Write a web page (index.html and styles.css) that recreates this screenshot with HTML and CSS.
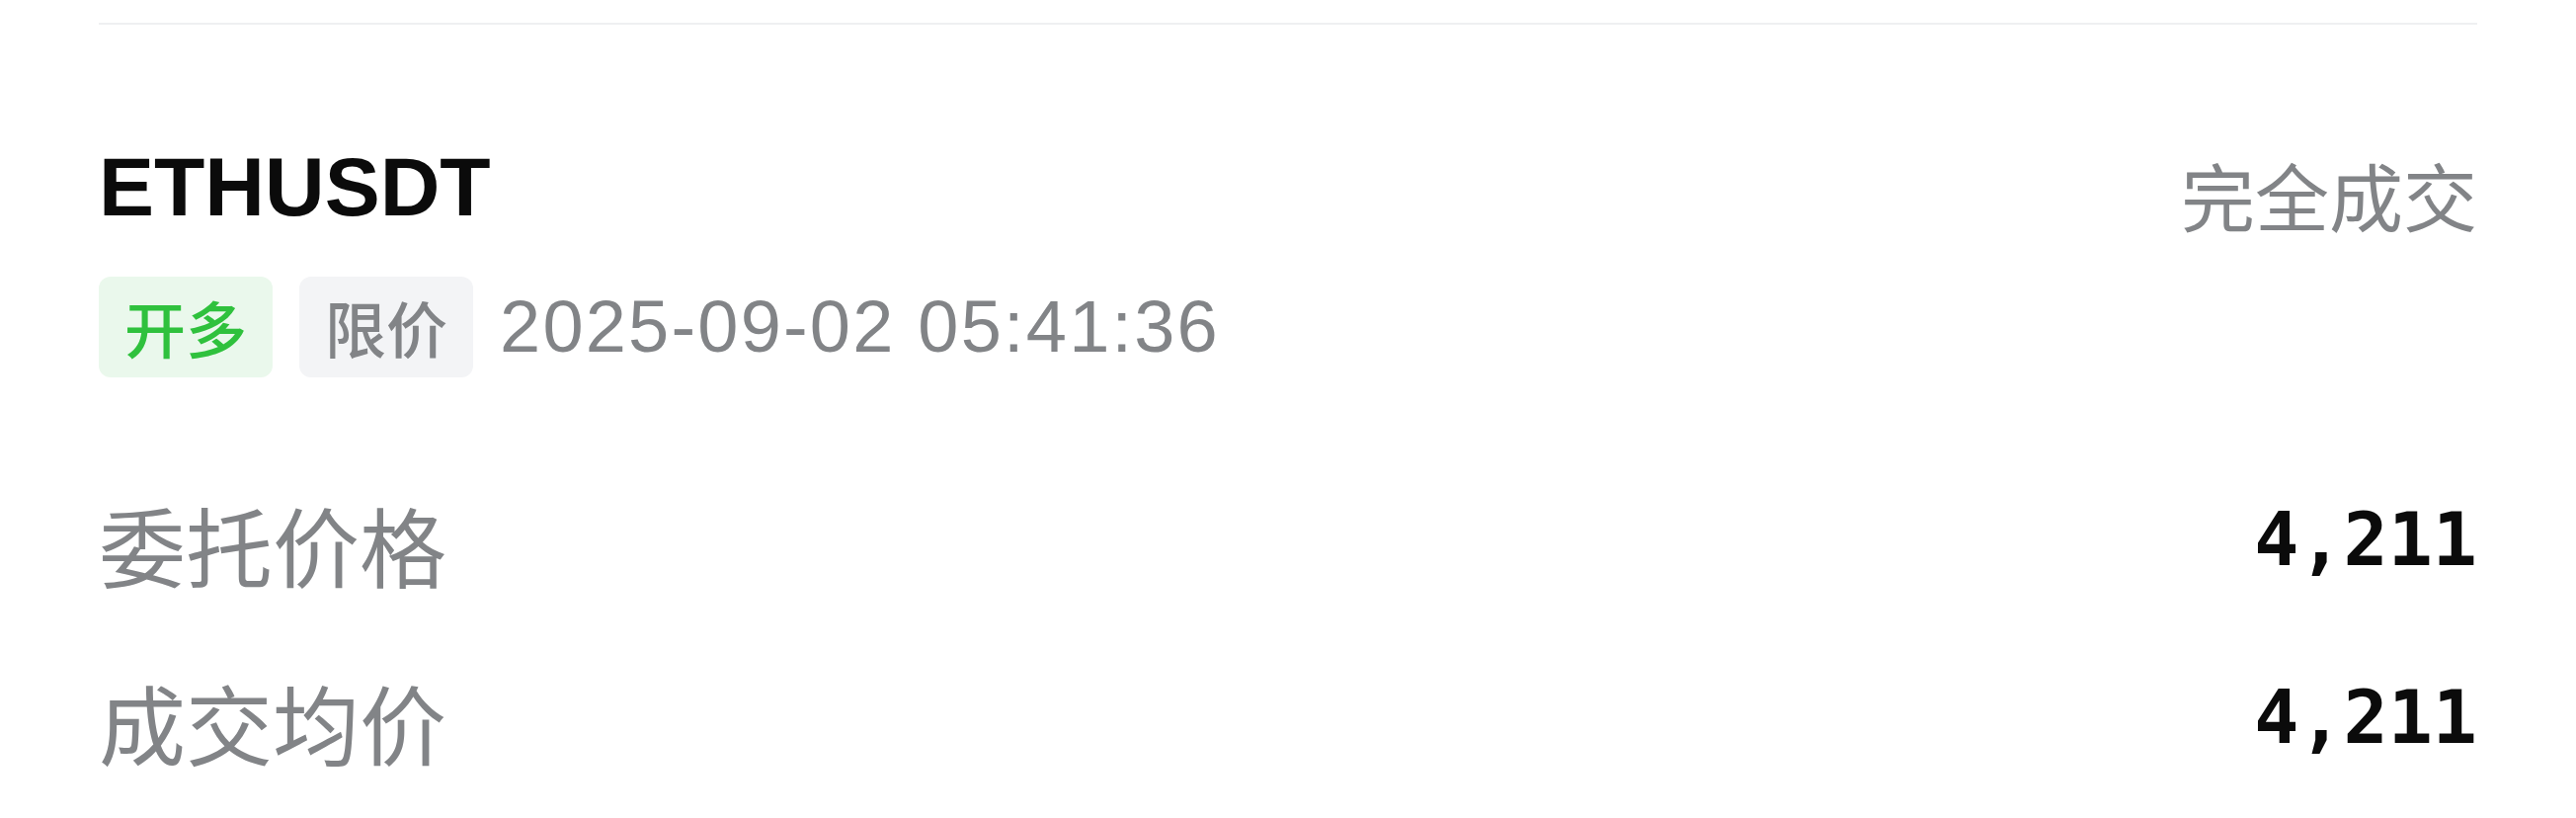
FILE: index.html
```html
<!DOCTYPE html>
<html lang="zh-CN">
  <head>
    <meta charset="UTF-8" />
    <meta name="viewport" content="width=device-width, initial-scale=1.0" />
    <title>订单详情 - ETHUSDT</title>
    <link rel="stylesheet" href="styles.css">
  </head>
  <body>
    <section class="order-card">
      <div class="divider"></div>

      <!-- Order header -->
      <div class="order-head">
        <div class="symbol">ETHUSDT</div>
        <div class="status">完全成交</div>
      </div>

      <div class="order-meta">
        <span class="tag tag-long">开多</span>
        <span class="tag tag-type">限价</span>
        <span class="order-time">2025-09-02 05:41:36</span>
      </div>

      <!-- Order details -->
      <div class="detail-list">
        <div class="detail-row">
          <span class="detail-label">委托价格</span>
          <span class="detail-value">4,211</span>
        </div>
        <div class="detail-row">
          <span class="detail-label">成交均价</span>
          <span class="detail-value">4,211</span>
        </div>
      </div>
    </section>
  </body>
</html>
```

FILE: styles.css
```css
* {
  margin: 0;
  padding: 0;
  box-sizing: border-box;
  font-family: "Liberation Sans", "Noto Sans CJK SC", sans-serif;
}

:root {
  --text: #0b0b0b;
  --muted: #828487;
  --green: #2fc13d;
  --green-bg: #eaf8ec;
  --gray-bg: #f3f4f6;
  --line: #eff0f1;
}

body {
  background: #ffffff;
  color: var(--text);
}

.order-card {
  padding: 0 100px;
}

.divider {
  margin-top: 23px;
  height: 2px;
  background: var(--line);
}

/* Header */
.order-head {
  display: flex;
  justify-content: space-between;
  align-items: flex-start;
  margin-top: 122px;
}

.symbol {
  font-size: 84px;
  line-height: 84px;
  font-weight: 700;
}

.status {
  margin-top: 12px;
  font-family: "Noto Sans CJK SC", sans-serif;
  font-size: 75px;
  line-height: 75px;
  color: var(--muted);
}

.order-meta {
  display: flex;
  align-items: center;
  gap: 27px;
  margin-top: 46px;
}

.tag {
  font-family: "Noto Sans CJK SC", sans-serif;
  font-size: 62px;
  font-weight: 500;
  line-height: 102px;
  padding: 0 26px;
  border-radius: 12px;
}

.tag-long {
  background: var(--green-bg);
  color: var(--green);
}

.tag-type {
  background: var(--gray-bg);
  color: var(--muted);
}

.order-time {
  font-size: 74px;
  line-height: 74px;
  letter-spacing: 2.2px;
  color: var(--muted);
}

/* Detail rows */
.detail-list {
  margin-top: 78px;
}

.detail-row {
  display: flex;
  justify-content: space-between;
  align-items: center;
  padding: 46px 0;
}

.detail-label {
  font-family: "Noto Sans CJK SC", sans-serif;
  font-size: 88px;
  line-height: 88px;
  color: var(--muted);
}

.detail-value {
  font-family: "DejaVu Sans Mono", monospace;
  font-size: 75px;
  line-height: 75px;
  font-weight: 700;
  margin-bottom: 8px;
}
```
